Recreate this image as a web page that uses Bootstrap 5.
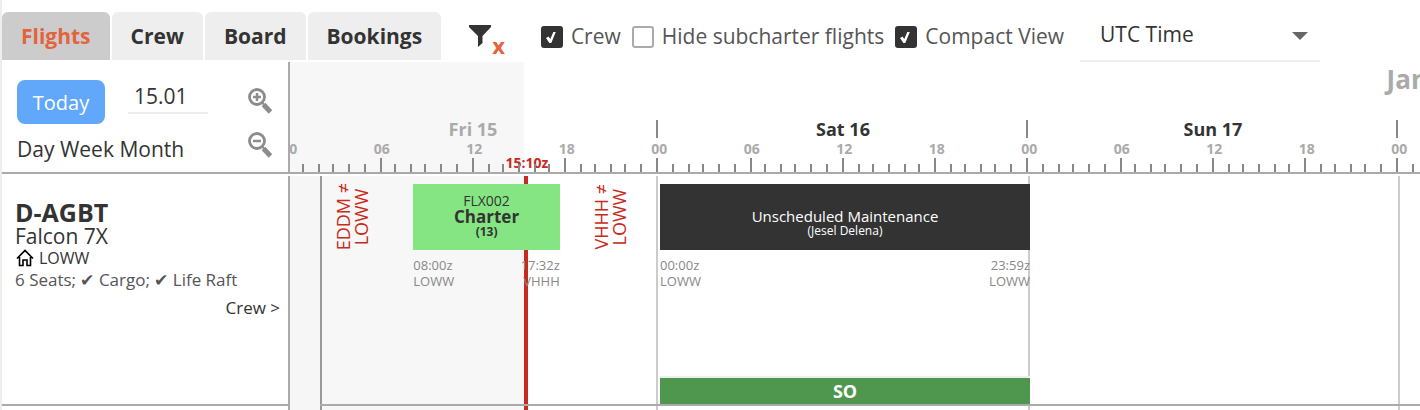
<!DOCTYPE html>
<html lang="en">
<head>
<meta charset="utf-8">
<meta name="viewport" content="width=device-width, initial-scale=1">
<title>Flight schedule</title>
<link href="https://cdn.jsdelivr.net/npm/bootstrap@5.3.0/dist/css/bootstrap.min.css" rel="stylesheet">
<style>
:root { --day: 370px; --ink: #333; --line: #aaa; --soft: #eee; --past: #f7f7f7; --accent: #e3643c; --alert: #c92a20; }
body { font-family: "Open Sans", "Noto Sans", sans-serif; font-size: 21px; line-height: 24px; color: var(--ink); border-left: 2px solid var(--soft); overflow-x: hidden; background: #fff; }
a { color: inherit; text-decoration: none; }

/* top bar */
.topbar { padding-top: 12px; height: 62px; }
.main-tabs { gap: 2px; border: 0; }
.main-tabs .nav-link { background: var(--soft); color: var(--ink); font-weight: 700; border: 0; border-radius: 6px 6px 0 0; margin: 0; padding: 12px 19px; line-height: 24px; }
.main-tabs .nav-link.active { background: #ccc; color: var(--accent); }
.filter-btn { margin-left: 27px; padding: 0; border: 0; background: none; height: 48px; }
.filter-btn b { color: var(--accent); font-size: 22px; padding-top: 18px; }
.controls { height: 48px; margin-left: 36px; gap: 11px; color: #555; }
.tick { gap: 8px; }
.tick .form-check-input { width: 22px; height: 22px; margin: 2px 0 0; border: 2px solid #aaa; border-radius: 3px; background-size: 22px; background-position: center; box-shadow: none; }
.tick .form-check-input:checked { background-color: var(--ink); border-color: var(--ink); background-image: url("data:image/svg+xml,%3Csvg xmlns='http://www.w3.org/2000/svg' viewBox='0 0 22 22'%3E%3Cpath d='M5 12l2.500-1.500 1.800 2.500 3-7h2.500L10.300 17H8.300z' fill='%23fff'/%3E%3C/svg%3E"); }
.zone { width: 240px; height: 50px; margin-left: 16px; padding: 0 20px 4px; border: 0; border-bottom: 2px solid var(--soft); border-radius: 0; font-size: 21px; line-height: 24px; color: var(--ink); background-size: 16px 8px; background-position: right 12px top 20px; background-image: url("data:image/svg+xml,%3Csvg xmlns='http://www.w3.org/2000/svg' viewBox='0 0 16 8'%3E%3Cpath d='M0 0h16L8 8z' fill='%23666'/%3E%3C/svg%3E"); }

/* left column */
.side { width: 288px; flex: none; border-right: 2px solid var(--line); }
.side-head { padding: 18px 15px 0; }
.today { width: 88px; height: 44px; padding: 2px 0 0; border: 0; border-radius: 8px; background: #61a8fa; color: #fff; font-size: 20px; line-height: 24px; }
.date-box { width: 80px; height: 34px; margin-left: 23px; padding: 0 6px; border: 0; border-bottom: 2px solid var(--soft); border-radius: 0; font-size: 21px; line-height: 24px; color: var(--ink); }
.zoom-btn { padding: 0; border: 0; background: none; line-height: 0; }
.zooms { gap: 18px; padding-top: 8px; margin-right: 1px; }
.scales { padding-top: 13px; }

/* ruler */
.head-row { border-bottom: 2px solid var(--line); height: 112px; }
.stack { display: grid; min-width: 0; }
.stack > * { grid-area: 1 / 1; min-width: 0; }
.past { background: var(--past); }
.month { font-size: 26px; line-height: 34px; font-weight: 700; color: var(--line); text-align: right; margin-right: -8px; }
.day-names { margin-left: -4px; padding-top: 24px; }
.day-name { width: var(--day); flex: none; height: 18px; border-left: 2px solid #888; font-size: 18px; line-height: 18px; font-weight: 700; text-align: center; padding-left: 2px; }
.hours { margin-left: -47px; height: 20px; }
.hours span { width: calc(var(--day) / 4); flex: none; text-align: center; font-size: 14px; line-height: 22px; font-weight: 700; color: var(--line); }
.ticks { margin-left: -4px; height: 14px; }
.tick-day { width: var(--day); flex: none; display: grid; align-items: end; grid-template-columns: 16px 16px 14px 16px 16px 16px 14px 16px 14px 16px 16px 16px 16px 14px 16px 16px 14px 16px 16px 14px 16px 14px 16px 16px; }
.tick-day i { border-left: 2px solid #888; height: 8px; }
.tick-day i:nth-child(6n+1) { height: 14px; }
.now-label { color: var(--alert); font-size: 14px; line-height: 10px; font-weight: 700; text-align: center; }

/* rows */
.plan { margin-top: 2px; }
.past-now { border-right: 4px solid var(--alert); }
.gutter { width: 32px; border-right: 2px solid #999; background: #f6f6f6; }
.day-lines { grid-template-columns: 368px 372px 370px; }
.day-lines i { border-right: 2px solid #ccc; }
.craft { min-height: 230px; }
.craft-info { border-bottom: 2px solid var(--line); padding: 24px 8px 0 13px; font-size: 17px; }
.craft-info h2 { font-size: 25px; line-height: 24px; font-weight: 700; margin: 0; }
.craft-info .kind { font-size: 21px; line-height: 24px; }
.craft-info .base { font-size: 16px; line-height: 20px; gap: 4px; }
.craft-info .extras { color: #555; }
.lane-line { border-bottom: 2px solid var(--line); margin-left: 30px; }
.slots { display: grid; width: calc(var(--day) * 3); grid-template-columns: repeat(288, minmax(0, 1fr)); }
.lane { padding: 8px 0 2px; }
.block { height: 66px; padding-top: 9px; text-align: center; font-size: 14px; line-height: 16px; }
.block strong { font-size: 17px; }
.block .sub { font-size: 12px; line-height: 14px; }
.charter { background: #86e583; }
.maint { background: var(--ink); color: #fff; padding-top: 25px; }
.maint-title { font-size: 15px; line-height: 15px; }
.times { font-size: 13px; line-height: 16px; color: #888; padding-top: 7px; }
.gap-note { height: 66px; display: flex; align-items: center; justify-content: center; color: var(--alert); font-size: 18px; line-height: 18px; text-align: center; }
.gap-note span { writing-mode: vertical-rl; transform: rotate(180deg); white-space: nowrap; }
.duty { background: #4f974e; color: #fff; border-top: 2px solid var(--soft); font-size: 18px; line-height: 26px; font-weight: 700; text-align: center; }
</style>
</head>
<body class="d-flex flex-column min-vh-100">

<header class="topbar d-flex align-items-start flex-shrink-0">
  <nav class="nav nav-tabs main-tabs flex-nowrap">
    <a class="nav-link active" href="#flights" aria-current="page">Flights</a>
    <a class="nav-link" href="#crew">Crew</a>
    <a class="nav-link" href="#board">Board</a>
    <a class="nav-link" href="#bookings">Bookings</a>
  </nav>
  <button class="filter-btn d-flex align-items-center" type="button" aria-label="Clear filter">
    <svg width="24" height="24" viewBox="0 0 24 24"><path d="M1 1h22v2l-8.500 9V19L10 23V12L1 3z" fill="#333"/></svg><b>x</b>
  </button>
  <div class="controls d-flex align-items-center text-nowrap">
    <div class="tick d-flex align-items-center"><input class="form-check-input" type="checkbox" id="showCrew" checked><label for="showCrew">Crew</label></div>
    <div class="tick d-flex align-items-center"><input class="form-check-input" type="checkbox" id="hideSub"><label for="hideSub">Hide subcharter flights</label></div>
    <div class="tick d-flex align-items-center"><input class="form-check-input" type="checkbox" id="compact" checked><label for="compact">Compact View</label></div>
  </div>
  <select class="form-select zone" aria-label="Time zone"><option>UTC Time</option><option>Local Time</option></select>
</header>

<section class="head-row d-flex flex-shrink-0">
  <div class="side side-head d-flex justify-content-between">
    <div>
      <div class="d-flex">
        <button class="today" type="button">Today</button>
        <input class="date-box" type="text" value="15.01" aria-label="Date">
      </div>
      <div class="scales"><a href="#day">Day</a> <a href="#week">Week</a> <a href="#month">Month</a></div>
    </div>
    <div class="zooms d-flex flex-column">
      <button class="zoom-btn" type="button" aria-label="Zoom in">
        <svg width="24" height="26" viewBox="0 0 24 26" fill="none" stroke="#8c8c8c"><circle cx="9" cy="9" r="7.500" stroke-width="2.800"/><path d="M5 9h8M9 5v8" stroke-width="2.500"/><path d="M14 14.500l2 2" stroke-width="2"/><path d="M15.500 16.500l7 7.500" stroke-width="5"/></svg>
      </button>
      <button class="zoom-btn" type="button" aria-label="Zoom out">
        <svg width="24" height="26" viewBox="0 0 24 26" fill="none" stroke="#8c8c8c"><circle cx="9" cy="9" r="7.500" stroke-width="2.800"/><path d="M5 9h8" stroke-width="2.500"/><path d="M14 14.500l2 2" stroke-width="2"/><path d="M15.500 16.500l7 7.500" stroke-width="5"/></svg>
      </button>
    </div>
  </div>
  <div class="stack flex-fill overflow-hidden">
    <div class="past" style="width:234px"></div>
    <div>
      <div class="month">Jan</div>
      <div class="day-names d-flex">
        <div class="day-name" style="color:#aaa">Fri 15</div>
        <div class="day-name">Sat 16</div>
        <div class="day-name">Sun 17</div>
        <div class="day-name"></div>
      </div>
      <div class="hours d-flex">
        <span>00</span><span>06</span><span>12</span><span>18</span>
        <span>00</span><span>06</span><span>12</span><span>18</span>
        <span>00</span><span>06</span><span>12</span><span>18</span><span>00</span>
      </div>
      <div class="stack">
        <div class="now-label" style="width:474px">15:10z</div>
        <div class="ticks d-flex">
          <div class="tick-day"><i></i><i></i><i></i><i></i><i></i><i></i><i></i><i></i><i></i><i></i><i></i><i></i><i></i><i></i><i></i><i></i><i></i><i></i><i></i><i></i><i></i><i></i><i></i><i></i></div>
          <div class="tick-day"><i></i><i></i><i></i><i></i><i></i><i></i><i></i><i></i><i></i><i></i><i></i><i></i><i></i><i></i><i></i><i></i><i></i><i></i><i></i><i></i><i></i><i></i><i></i><i></i></div>
          <div class="tick-day"><i></i><i></i><i></i><i></i><i></i><i></i><i></i><i></i><i></i><i></i><i></i><i></i><i></i><i></i><i></i><i></i><i></i><i></i><i></i><i></i><i></i><i></i><i></i><i></i></div>
          <div class="tick-day"><i></i><i></i><i></i><i></i><i></i><i></i><i></i><i></i><i></i><i></i><i></i><i></i><i></i><i></i><i></i><i></i><i></i><i></i><i></i><i></i><i></i><i></i><i></i><i></i></div>
        </div>
      </div>
    </div>
  </div>
</section>

<main class="plan d-flex flex-fill">
  <div class="side">
    <div class="craft craft-info">
      <h2>D-AGBT</h2>
      <div class="kind">Falcon 7X</div>
      <div class="base d-flex align-items-center">
        <svg width="20" height="18" viewBox="0 0 20 18" fill="none" stroke="#000" stroke-width="1.600"><path d="M2 9.500L10 1.500l8 8M4.500 8v8.500h3.500V11h4v5.500h3.500V8"/></svg>
        <span>LOWW</span>
      </div>
      <div class="extras">6 Seats; ✔ Cargo; ✔ Life Raft</div>
      <div class="text-end mt-1"><a href="#row-crew">Crew &gt;</a></div>
    </div>
  </div>
  <div class="stack flex-fill overflow-hidden">
    <div class="past past-now" style="width:238px"></div>
    <div class="gutter"></div>
    <div class="day-lines d-grid"><i></i><i></i><i></i></div>
    <div>
      <div class="craft stack">
        <div class="lane d-flex flex-column justify-content-between">
          <div class="slots">
            <div class="gap-note" style="grid-column:9/25"><span>EDDM ≠<br>LOWW</span></div>
            <div style="grid-column:33/71">
              <div class="block charter"><div>FLX002</div><strong class="d-block">Charter</strong><div class="sub fw-bold">(13)</div></div>
              <div class="times d-flex justify-content-between"><div>08:00z<br>LOWW</div><div class="text-end">17:32z<br>VHHH</div></div>
            </div>
            <div class="gap-note" style="grid-column:76/92"><span>VHHH ≠<br>LOWW</span></div>
            <div style="grid-column:97/193">
              <div class="block maint"><div class="maint-title">Unscheduled Maintenance</div><div class="sub">(Jesel Delena)</div></div>
              <div class="times d-flex justify-content-between"><div>00:00z<br>LOWW</div><div class="text-end">23:59z<br>LOWW</div></div>
            </div>
          </div>
          <div class="slots">
            <div class="duty" style="grid-column:97/193">SO</div>
          </div>
        </div>
        <div class="lane-line"></div>
      </div>
    </div>
  </div>
</main>

<script src="https://cdn.jsdelivr.net/npm/bootstrap@5.3.0/dist/js/bootstrap.bundle.min.js"></script>
</body>
</html>
